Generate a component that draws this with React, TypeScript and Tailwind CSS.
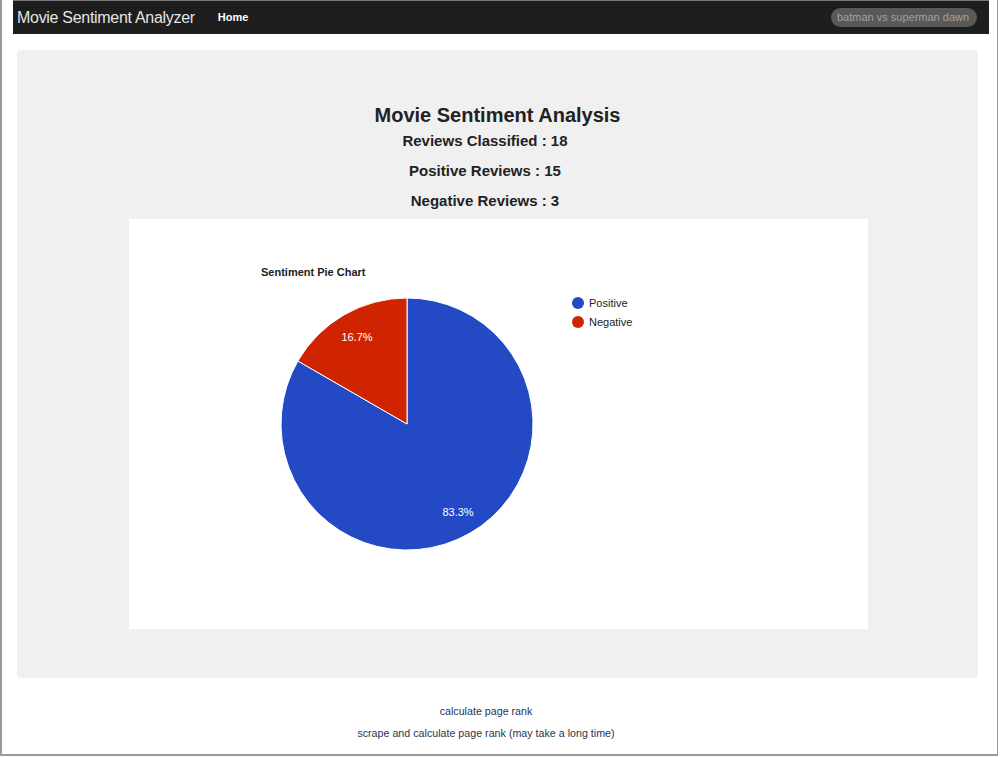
import React from "react";

// Pie geometry, relative to the chart box
const CX = 278;
const CY = 205;
const R = 126;

export default function App() {
  const stats = [
    { label: "Reviews Classified", value: 18 },
    { label: "Positive Reviews", value: 15 },
    { label: "Negative Reviews", value: 3 },
  ];

  return (
    <div className="w-[1000px] h-[757px] bg-white font-['Liberation_Sans',Arial,sans-serif]">
      <div className="w-[998px] h-[756px] border-l-2 border-r border-b-2 border-[#9a9a9a] flex flex-col">
        {/* Navbar */}
        <div className="ml-[11px] w-[976px] h-[34px] bg-[#1e1e1e] border-t border-[#777] flex items-center">
          <span className="ml-[4px] text-[16px] font-light text-[#e4e4e4] tracking-[-0.3px]">
            Movie Sentiment Analyzer
          </span>
          <span className="ml-[23px] text-[11px] font-bold text-white">Home</span>
          <div className="ml-auto mr-[12px] w-[146px] h-[19px] rounded-full bg-[#595959] flex items-center px-[6px]">
            <span className="text-[11px] text-[#a0a0a0] whitespace-nowrap">batman vs superman dawn</span>
          </div>
        </div>

        {/* Main panel */}
        <div className="ml-[15px] mt-[16px] w-[961px] h-[628px] rounded-[4px] bg-[#f0f0f0] pt-[53px] flex flex-col items-center text-[#222]">
          <h1 className="text-[20px] leading-[24px] font-bold">Movie Sentiment Analysis</h1>
          {stats.map((s, i) => (
            <div
              key={s.label}
              className={`mr-[25px] text-[15px] leading-[20px] font-bold ${i === 0 ? "mt-[4px]" : "mt-[10px]"}`}
            >
              {s.label} : {s.value}
            </div>
          ))}

          {/* Chart */}
          <div className="mt-[8px] ml-[2px] w-[739px] h-[410px] bg-white">
            <svg width="739" height="410" className="block">
              <text x="132" y="57" fontSize="11" fontWeight="bold" fill="#222" fontFamily="Liberation Sans, Arial, sans-serif">
                Sentiment Pie Chart
              </text>
              <path
                d={`M${CX},${CY} L${CX},${CY - R} A${R},${R} 0 1 1 ${CX - 109.1},${CY - 63} Z`}
                fill="#2349c5"
                stroke="#fff"
                strokeWidth="1"
              />
              <path
                d={`M${CX},${CY} L${CX - 109.1},${CY - 63} A${R},${R} 0 0 1 ${CX},${CY - R} Z`}
                fill="#d02300"
                stroke="#fff"
                strokeWidth="1"
              />
              <text x="228" y="122" fontSize="11" fill="#fff" textAnchor="middle" fontFamily="Liberation Sans, Arial, sans-serif">
                16.7%
              </text>
              <text x="329" y="297" fontSize="11" fill="#fff" textAnchor="middle" fontFamily="Liberation Sans, Arial, sans-serif">
                83.3%
              </text>
              <circle cx="449" cy="84" r="6" fill="#2349c5" />
              <text x="460" y="88" fontSize="11" fill="#222" fontFamily="Liberation Sans, Arial, sans-serif">
                Positive
              </text>
              <circle cx="449" cy="103" r="6" fill="#d02300" />
              <text x="460" y="107" fontSize="11" fill="#222" fontFamily="Liberation Sans, Arial, sans-serif">
                Negative
              </text>
            </svg>
          </div>
        </div>

        {/* Footer links */}
        <div className="mt-[26px] mr-[27px] flex flex-col items-center gap-[8px] text-[10.7px] leading-[14px] text-[#2c3352]">
          <a className="cursor-pointer">calculate page rank</a>
          <a className="cursor-pointer">scrape and calculate page rank (may take a long time)</a>
        </div>
      </div>
    </div>
  );
}
